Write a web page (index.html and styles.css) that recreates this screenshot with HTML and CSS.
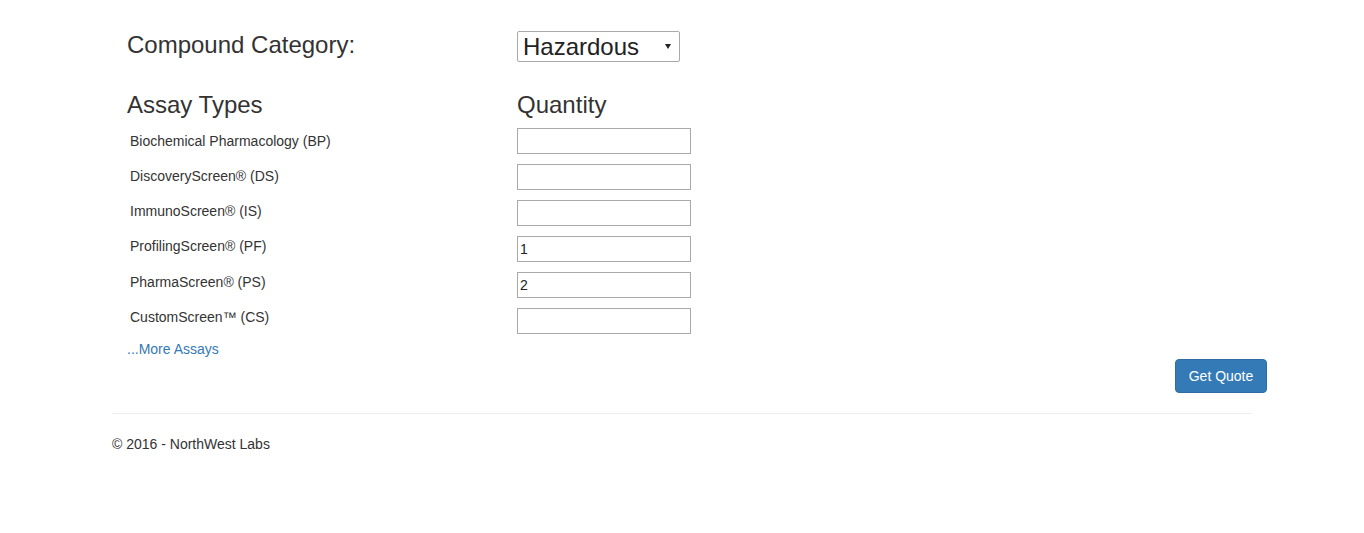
FILE: index.html
```html
<!DOCTYPE html>
<html>
<head>
<meta charset="utf-8">
<title>Quote</title>
<link rel="stylesheet" href="styles.css">
</head>
<body>
<div class="container">
  <form class="quote-form">
    <div class="category-row">
      <h3 class="big-label">Compound Category:</h3>
      <span class="select-wrap">
        <select class="category-select">
          <option>Hazardous</option>
          <option>Non-Hazardous</option>
        </select>
      </span>
    </div>
    <div class="head-row">
      <h3 class="big-label">Assay Types</h3>
      <h3 class="big-label">Quantity</h3>
    </div>
    <div class="assay-grid">
      <div class="label-col">
        <label class="assay-label">Biochemical Pharmacology (BP)</label>
        <label class="assay-label">DiscoveryScreen® (DS)</label>
        <label class="assay-label">ImmunoScreen® (IS)</label>
        <label class="assay-label">ProfilingScreen® (PF)</label>
        <label class="assay-label">PharmaScreen® (PS)</label>
        <label class="assay-label">CustomScreen™ (CS)</label>
      </div>
      <div class="input-col">
        <input class="qty" type="text" value="">
        <input class="qty" type="text" value="">
        <input class="qty" type="text" value="">
        <input class="qty" type="text" value="1">
        <input class="qty" type="text" value="2">
        <input class="qty" type="text" value="">
      </div>
    </div>
    <a class="more-link" href="#">...More Assays</a>
    <div class="actions">
      <button class="btn-primary" type="button">Get Quote</button>
    </div>
  </form>
  <hr class="divider">
  <footer class="footer">
    <p class="copy">© 2016 - NorthWest Labs</p>
  </footer>
</div>
</body>
</html>
```

FILE: styles.css
```css
* { box-sizing: border-box; }
html, body { margin: 0; padding: 0; background: #fff; }
body {
  font-family: "Liberation Sans", Arial, sans-serif;
  font-size: 14px;
  line-height: 20px;
  color: #333;
}
.container {
  width: 1170px;
  margin: 0 auto;
  padding: 31px 15px 0;
}
.quote-form {
  padding: 0 15px;
}
.category-row {
  display: grid;
  grid-template-columns: 390px auto;
  align-items: start;
}
.big-label {
  margin: 0;
  font-size: 24px;
  font-weight: 400;
  line-height: 28px;
  color: #333;
}
.select-wrap {
  position: relative;
  display: inline-block;
  width: 163px;
  height: 31px;
}
.category-select {
  -webkit-appearance: none;
  appearance: none;
  width: 163px;
  height: 31px;
  margin: 0;
  padding: 0 20px 0 5px;
  border: 1px solid #a9a9a9;
  border-radius: 2px;
  background: #fff;
  font-family: "Liberation Sans", Arial, sans-serif;
  font-size: 24px;
  color: #222;
  line-height: 29px;
}
.select-wrap::after {
  content: "";
  position: absolute;
  right: 9px;
  top: 13px;
  border-left: 3px solid transparent;
  border-right: 3px solid transparent;
  border-top: 5px solid #222;
  pointer-events: none;
}
.head-row {
  display: grid;
  grid-template-columns: 390px auto;
  margin-top: 30px;
}
.head-row .big-label {
  line-height: 26px;
}
.assay-grid {
  display: grid;
  grid-template-columns: 390px 174px;
  margin-top: 10px;
}
.label-col {
  display: flex;
  flex-direction: column;
  gap: 15.3px;
  padding-top: 2.5px;
}
.input-col {
  display: flex;
  flex-direction: column;
  gap: 10px;
}
.assay-label {
  display: block;
  padding-left: 3px;
  font-size: 14px;
  line-height: 20px;
  color: #333;
}
.qty {
  width: 174px;
  height: 26px;
  margin: 0;
  padding: 1px 2px;
  border: 1px solid #a9a9a9;
  border-radius: 0;
  font-family: "Liberation Sans", Arial, sans-serif;
  font-size: 14px;
  color: #222;
  background: #fff;
}
.more-link {
  display: block;
  margin-top: 5px;
  color: #337ab7;
  text-decoration: none;
  font-size: 14px;
  line-height: 20px;
}
.actions {
  display: flex;
  justify-content: flex-end;
  margin-right: -30px;
}
.btn-primary {
  width: 92px;
  height: 34px;
  padding: 6px 0;
  border: 1px solid #2e6da4;
  border-radius: 4px;
  background: #337ab7;
  color: #fff;
  font-family: "Liberation Sans", Arial, sans-serif;
  font-size: 14px;
  line-height: 20px;
  text-align: center;
  cursor: pointer;
}
.divider {
  margin: 20px 0;
  border: 0;
  border-top: 1px solid #eee;
}
.copy {
  margin: 0;
  font-size: 14px;
  line-height: 20px;
  color: #333;
}
```
